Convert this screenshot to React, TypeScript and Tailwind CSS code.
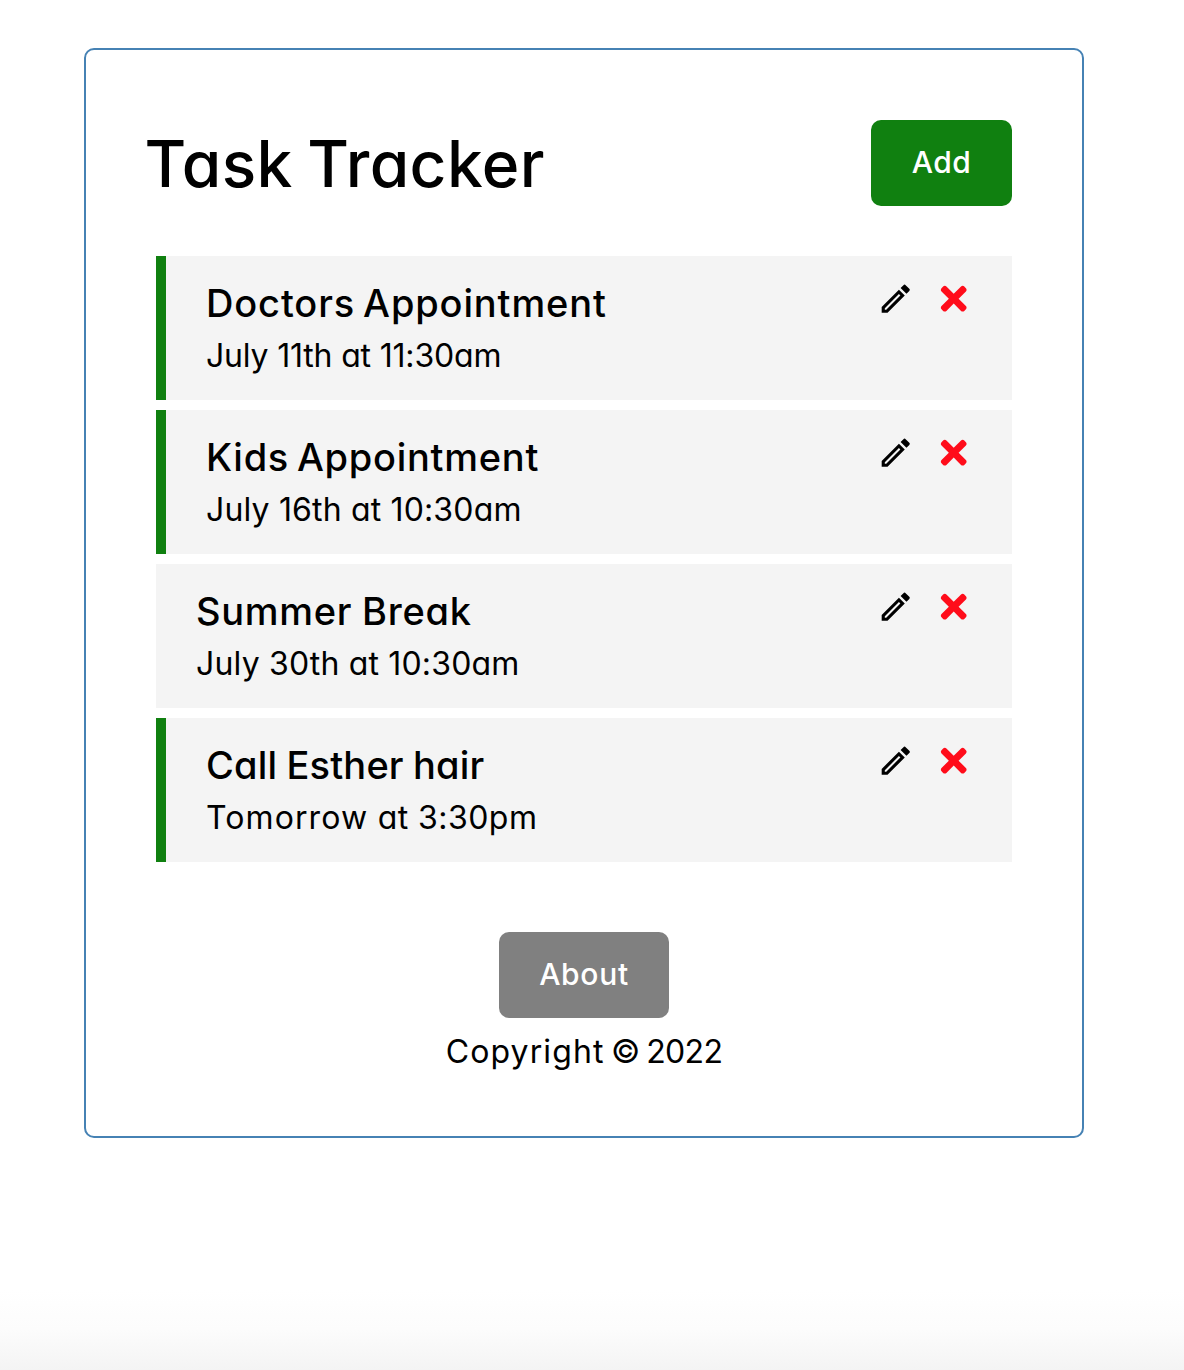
import type { ReactNode } from "react";
import { MdOutlineModeEdit } from "react-icons/md";
import { FaTimes } from "react-icons/fa";

type Task = {
  id: number;
  title: string;
  titleClass: string;
  day: ReactNode;
  dayClass: string;
  reminder: boolean;
};

const tasks: Task[] = [
  {
    id: 1,
    title: "Doctors Appointment",
    titleClass: "tracking-[0.87px] [word-spacing:-3px]",
    day: "July 11th at 11:30am",
    dayClass: "tracking-[-0.18px]",
    reminder: true,
  },
  {
    id: 2,
    title: "Kids Appointment",
    titleClass: "tracking-[0.73px] [word-spacing:-3px]",
    day: "July 16th at 10:30am",
    dayClass: "tracking-[0.16px]",
    reminder: true,
  },
  {
    id: 3,
    title: "Summer Break",
    titleClass: "tracking-[0.72px] [word-spacing:-1px]",
    day: "July 30th at 10:30am",
    dayClass: "tracking-[0.18px]",
    reminder: false,
  },
  {
    id: 4,
    title: "Call Esther hair",
    titleClass: "tracking-[0.17px] [word-spacing:-1px]",
    day: (
      <>
        <span className="tracking-[1.1px]">Tomorrow</span> at 3:30pm
      </>
    ),
    dayClass: "tracking-[0.45px]",
    reminder: true,
  },
];

function TaskRow({ task }: { task: Task }) {
  return (
    <article
      className={`flex h-36 justify-between bg-[#f4f4f4] px-10 pt-6 ${
        task.reminder ? "border-l-[10px] border-[#108010]" : ""
      }`}
    >
      <div className="whitespace-nowrap">
        <h3 className={`h-[52px] text-[38px] leading-[46px] font-medium ${task.titleClass}`}>
          {task.title}
        </h3>
        <p className={`text-[32px] leading-[48px] ${task.dayClass}`}>{task.day}</p>
      </div>
      <div className="flex gap-5">
        <MdOutlineModeEdit className="size-[37.44px]" />
        <FaTimes className="size-[37.44px] text-[#ff0c1a]" />
      </div>
    </article>
  );
}

export default function App() {
  return (
    <div className="flex h-[1370px] flex-col justify-between bg-white pt-12 font-['Inter',sans-serif] text-black [font-feature-settings:'cv11']">
      <main className="ml-[84px] flex h-[1090px] w-[1000px] flex-col rounded-[10px] border-2 border-[#4682b4] px-[60px] pt-[70px]">
        <header className="mb-[50px] flex h-[86px] items-center justify-between pr-[10px]">
          <h1 className="-ml-[1.5px] pt-0.5 text-[64px] leading-none font-medium tracking-[0.4px] [word-spacing:-3px]">
            Task Tracker
          </h1>
          <button className="h-[86px] w-[141px] rounded-[10px] bg-[#108010] pb-0.5 text-[30px] font-medium tracking-[0.5px] text-white">
            Add
          </button>
        </header>
        <section className="flex flex-col gap-[10px] px-[10px]">
          {tasks.map((task) => (
            <TaskRow key={task.id} task={task} />
          ))}
        </section>
        <footer className="mt-[70px] flex flex-col items-center">
          <button className="h-[86px] w-[170px] rounded-[10px] bg-[#808080] pb-0.5 text-[30px] font-medium tracking-[0.7px] text-white">
            About
          </button>
          <p className="mt-[10px] text-[32px] leading-[48px]">
            <span className="tracking-[1.1px]">Copyright</span>
            <span className="tracking-[-0.7px] [word-spacing:-1.7px]"> © 2022</span>
          </p>
        </footer>
      </main>
      <div className="h-20 bg-linear-to-b from-white via-[#fcfcfc] to-[#f4f4f4]" />
    </div>
  );
}
